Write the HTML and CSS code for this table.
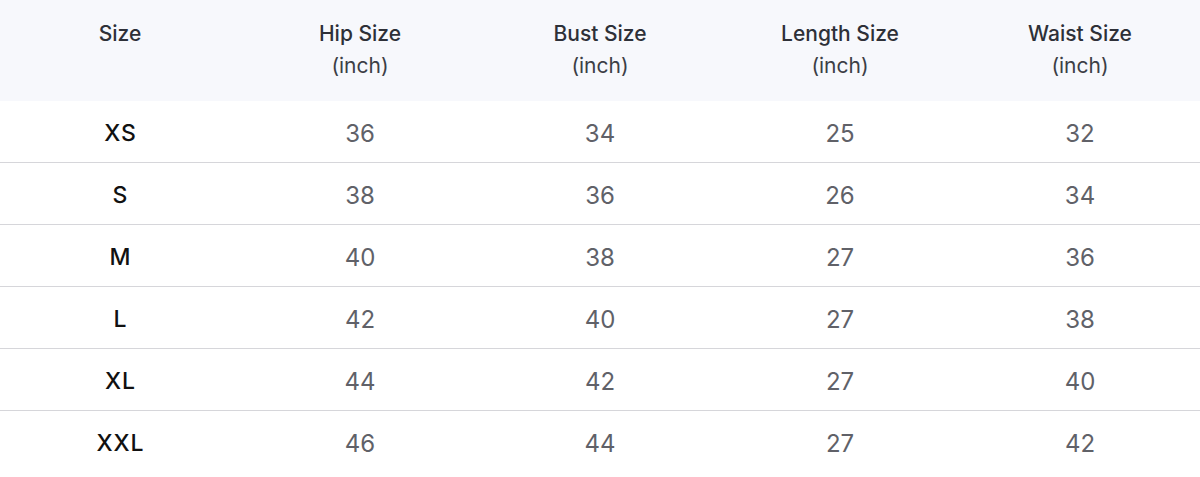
FILE: index.html
```html
<!DOCTYPE html>
<html>
<head>
<meta charset="utf-8">
<link rel="stylesheet" href="styles.css">
</head>
<body>
<table class="chart">
  <thead>
    <tr>
      <th>Size</th>
      <th>Hip Size<br><span class="unit">(inch)</span></th>
      <th>Bust Size<br><span class="unit">(inch)</span></th>
      <th>Length Size<br><span class="unit">(inch)</span></th>
      <th>Waist Size<br><span class="unit">(inch)</span></th>
    </tr>
  </thead>
  <tbody>
    <tr><td class="size">XS</td><td>36</td><td>34</td><td>25</td><td>32</td></tr>
    <tr><td class="size">S</td><td>38</td><td>36</td><td>26</td><td>34</td></tr>
    <tr><td class="size">M</td><td>40</td><td>38</td><td>27</td><td>36</td></tr>
    <tr><td class="size">L</td><td>42</td><td>40</td><td>27</td><td>38</td></tr>
    <tr><td class="size">XL</td><td>44</td><td>42</td><td>27</td><td>40</td></tr>
    <tr><td class="size">XXL</td><td>46</td><td>44</td><td>27</td><td>42</td></tr>
  </tbody>
</table>
</body>
</html>
```
FILE: styles.css
```css
html, body {
  margin: 0;
  padding: 0;
  background: #ffffff;
}
body {
  font-family: Inter, "Noto Sans", sans-serif;
}
.chart {
  width: 1200px;
  border-collapse: collapse;
  table-layout: fixed;
}
.chart th {
  background: #f7f8fc;
  height: 101px;
  box-sizing: border-box;
  padding: 18px 0 0;
  vertical-align: top;
  font-weight: 500;
  font-size: 21px;
  line-height: 32px;
  color: #2e3038;
  text-align: center;
}
.chart th .unit {
  font-weight: 400;
  color: #3c3e46;
}
.chart td {
  height: 58px;
  padding: 3px 0 0;
  text-align: center;
  vertical-align: middle;
  font-size: 24px;
  color: #606168;
  border-bottom: 1px solid #d6d6da;
}
.chart tbody tr:last-child td {
  border-bottom: none;
}
.chart td.size {
  color: #111111;
  font-size: 23px;
  font-weight: 500;
  letter-spacing: 1px;
  text-indent: 1px;
}
```
